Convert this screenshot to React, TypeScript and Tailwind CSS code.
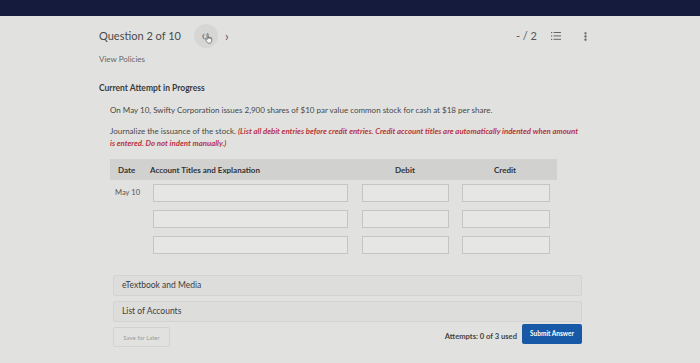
import { MoreVertical } from "lucide-react";

// A journal-entry question page from an online homework tool.
const ROWS = ["May 10", "", ""];

function Field({ className }: { className: string }) {
  return <div className={`h-[18px] border border-[#c4c6c4] bg-[#e6e7e5] ${className}`} />;
}

export default function App() {
  return (
    <div className="h-[363px] w-[700px] overflow-hidden bg-[#e1e2e0] font-['Lato','Liberation_Sans',sans-serif] text-[#3c3c3c]">
      <div className="h-[16px] bg-[#141b3c]" />

      <div className="ml-[99px] w-[492px]">
        {/* Question navigation */}
        <div className="mt-[8px] flex h-[24px] items-center">
          <span className="text-[11px] text-[#4a4a4a]">Question 2 of 10</span>
          <div className="relative ml-[13px] flex h-[24px] w-[24px] items-center justify-center rounded-full bg-[#d6d7d5] text-[13px] leading-none text-[#666]">
            <span className="-ml-[5px] -mt-[2px]">‹</span>
            <svg viewBox="0 0 16 16" className="absolute left-[9px] top-[8px] h-[13px] w-[13px]" fill="#f4f4f4" stroke="#555" strokeWidth="0.9">
              <path d="M5 2.5c0-.8 1.3-.8 1.3 0V8l.2-1.3c.2-.8 1.3-.7 1.3.1v1l.2-.7c.2-.8 1.3-.7 1.3.1v.9l.2-.5c.3-.7 1.2-.5 1.2.2v3c0 1.6-1 3-2.8 3H7.3C6 13.8 5 12.8 4.3 11.6L2.8 9c-.4-.7.5-1.3 1.1-.8L5 9.4z" />
            </svg>
          </div>
          <span className="ml-[7px] text-[13px] leading-none text-[#555]">›</span>
          <div className="ml-auto flex items-center text-[#555]">
            <span className="text-[11px]">- / 2</span>
            <svg viewBox="0 0 10 8" className="ml-[14px] h-[8px] w-[10px]" fill="#666">
              <rect x="0" y="0" width="1.2" height="1.2" />
              <rect x="2.5" y="0" width="7.5" height="1" />
              <rect x="0" y="3.4" width="1.2" height="1.2" />
              <rect x="2.5" y="3.4" width="7.5" height="1" />
              <rect x="0" y="6.8" width="1.2" height="1.2" />
              <rect x="2.5" y="6.8" width="7.5" height="1" />
            </svg>
            <MoreVertical className="ml-[19px] h-[11px] w-[11px]" strokeWidth={3} />
          </div>
        </div>

        <p className="mt-[6px] text-[8px] leading-[10px] text-[#666]">View Policies</p>

        <p className="mt-[19px] text-[8.5px] font-bold leading-[10px] text-[#3a3a3a]">Current Attempt in Progress</p>

        <div className="ml-[11px]">
          <p className="mt-[12px] text-[8px] leading-[10px] text-[#474747]">
            On May 10, Swifty Corporation issues 2,900 shares of $10 par value common stock for cash at $18 per share.
          </p>

          <p className="mt-[10px] w-[472px] text-[8px] leading-[12px] text-[#474747]">
            Journalize the issuance of the stock.{" "}
            <span className="text-[7.8px] font-bold italic text-[#b8343f]">
              (List all debit entries before credit entries. Credit account titles are automatically indented when amount is entered. Do not indent manually.)
            </span>
          </p>

          {/* Journal table */}
          <div className="mt-[10px] w-[447px]">
            <div className="flex h-[21px] items-center bg-[#d1d2d0] text-[8px] font-bold text-[#333]">
              <span className="ml-[8px] w-[32px]">Date</span>
              <span className="w-[205px]">Account Titles and Explanation</span>
              <span className="w-[100px] text-center">Debit</span>
              <span className="w-[100px] text-center">Credit</span>
            </div>
            <div className="mt-[4px] flex flex-col gap-[8px]">
              {ROWS.map((date, i) => (
                <div key={i} className="flex items-center">
                  <span className="ml-[5px] w-[38px] text-[7.6px] text-[#555]">{date}</span>
                  <Field className="w-[195px]" />
                  <Field className="ml-[14px] w-[87px]" />
                  <Field className="ml-[13px] w-[88px]" />
                </div>
              ))}
            </div>
          </div>
        </div>

        {/* Resource panels */}
        <div className="ml-[14px] mt-[21px] flex w-[469px] flex-col gap-[5px]">
          <div className="flex h-[21px] items-center rounded-[2px] border border-[#d3d4d2] bg-[#dddedc] pl-[8px] text-[8.5px] text-[#3c3c3c]">
            eTextbook and Media
          </div>
          <div className="flex h-[21px] items-center rounded-[2px] border border-[#d3d4d2] bg-[#dddedc] pl-[8px] text-[8.5px] text-[#3c3c3c]">
            List of Accounts
          </div>
          <div className="flex items-center">
            <div className="flex h-[20px] w-[57px] items-center justify-center rounded-[2px] border border-[#d2d3d1] text-[6px] text-[#9a9a9a]">
              Save for Later
            </div>
            <span className="ml-auto text-[7.6px] font-bold text-[#444]">Attempts: 0 of 3 used</span>
            <div className="ml-[5px] flex h-[20px] w-[60px] -translate-y-[3px] items-center justify-center rounded-[2px] bg-[#1759a6] text-[6.5px] font-bold text-white">
              Submit Answer
            </div>
          </div>
        </div>
      </div>
    </div>
  );
}
